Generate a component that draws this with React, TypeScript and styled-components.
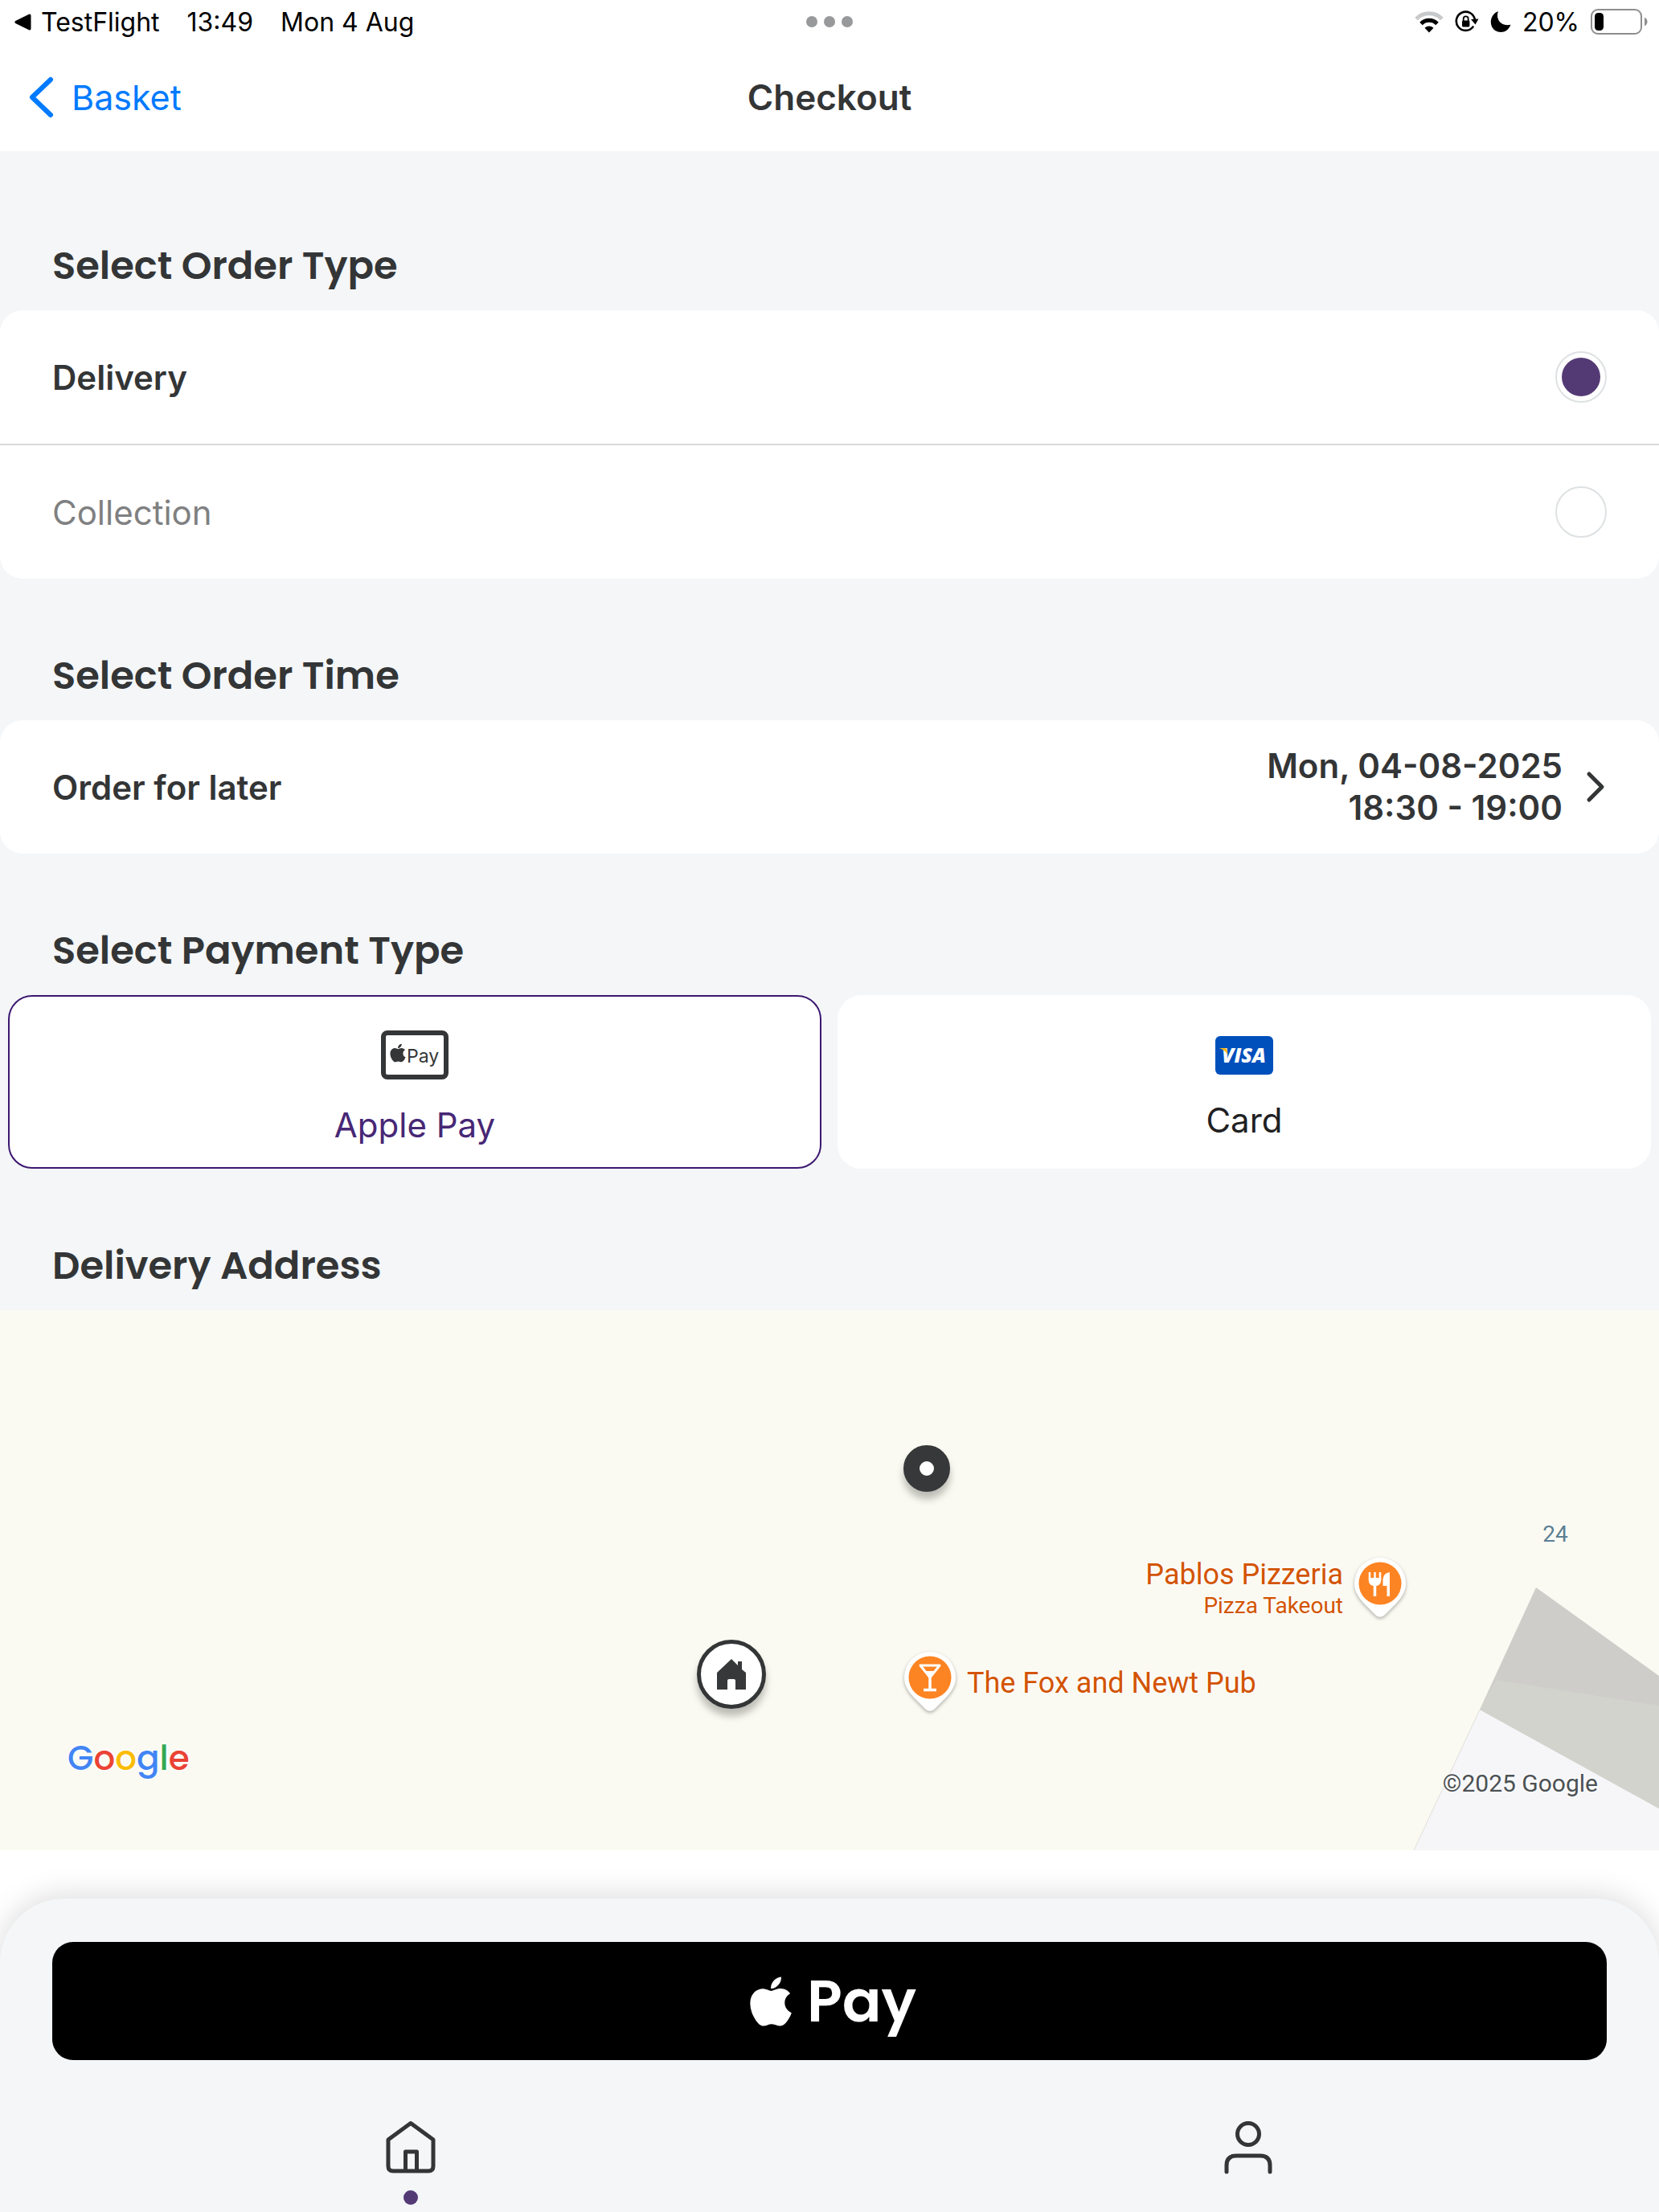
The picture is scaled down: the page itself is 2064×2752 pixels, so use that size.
import React, { useState } from 'react';
import styled, { createGlobalStyle } from 'styled-components';
import { FaApple } from 'react-icons/fa';

const GlobalStyle = createGlobalStyle`
  * {
    box-sizing: border-box;
  }

  body {
    margin: 0;
    background: #ffffff;
    color: #333536;
    font-family: Inter, "Liberation Sans", sans-serif;
  }

  button, input {
    font: inherit;
    color: inherit;
    margin: 0;
  }
`;

const Page = styled.div`
  min-height: 100vh;
  display: flex;
  flex-direction: column;
  overflow: hidden;
`;

const StatusBar = styled.div`
  display: grid;
  grid-template-columns: 1fr auto 1fr;
  align-items: center;
  height: 54px;
  padding: 0 14px;
  color: #000000;
  font-size: 32px;
`;

const StatusGroup = styled.div<{ $end?: boolean }>`
  display: flex;
  align-items: center;
  gap: ${({ $end }) => ($end ? '14px' : '34px')};
  padding-left: 4px;
  justify-content: ${({ $end }) => ($end ? 'flex-end' : 'flex-start')};
`;

const BackToApp = styled.span`
  display: flex;
  align-items: center;
  gap: 12px;
`;

const Dots = styled.div`
  display: flex;
  gap: 8px;

  i {
    width: 14px;
    height: 14px;
    border-radius: 50%;
    background: #98999b;
  }
`;

const NavBar = styled.header`
  display: grid;
  grid-template-columns: 1fr auto 1fr;
  align-items: center;
  height: 134px;
  padding: 0 34px;
`;

const BackLink = styled.a`
  display: flex;
  align-items: center;
  gap: 22px;
  color: #007aff;
  font-size: 43px;
  text-decoration: none;
`;

const Title = styled.h1`
  margin: 0;
  font-size: 44px;
  font-weight: 600;
`;

const Content = styled.main`
  padding-top: 22px;
  background: #f4f6f8;
`;

const SectionTitle = styled.h2`
  margin: 85px 65px 19px;
  font-family: Poppins, Inter, sans-serif;
  font-size: 48px;
  font-weight: 600;
  line-height: 72px;
`;

const Card = styled.div`
  background: #ffffff;
  border-radius: 28px;
  overflow: hidden;
`;

const OptionRow = styled.label<{ $active: boolean }>`
  display: flex;
  align-items: center;
  justify-content: space-between;
  height: 166px;
  padding: 0 65px;
  font-size: 42px;
  font-weight: ${({ $active }) => ($active ? 600 : 400)};
  color: ${({ $active }) => ($active ? '#333536' : '#7f8081')};

  & + & {
    height: 168px;
    border-top: 2px solid #d9dadc;
  }
`;

const Radio = styled.input`
  appearance: none;
  width: 64px;
  height: 64px;
  padding: 6px;
  border: 2px solid #dee1e3;
  border-radius: 50%;
  background: #ffffff;

  &:checked {
    background: #543a75 content-box;
  }
`;

const TimeRow = styled.button`
  display: flex;
  align-items: center;
  width: 100%;
  height: 166px;
  padding: 0 67px 0 65px;
  border: 0;
  background: #ffffff;
  font-size: 42px;
  font-weight: 600;
  text-align: left;
`;

const TimeValue = styled.span`
  margin-left: auto;
  margin-right: 29px;
  line-height: 52px;
  text-align: right;
`;

const PaymentRow = styled.div`
  display: grid;
  grid-template-columns: 1fr 1fr;
  gap: 20px;
  padding: 0 10px;
`;

const PaymentOption = styled.button<{ $active: boolean }>`
  display: flex;
  flex-direction: column;
  align-items: center;
  justify-content: center;
  gap: 31px;
  height: 216px;
  padding: 16px 0 0;
  border: 2px solid ${({ $active }) => ($active ? '#3c1870' : '#ffffff')};
  border-radius: 30px;
  background: #ffffff;
  color: ${({ $active }) => ($active ? '#472775' : '#1f2122')};
  font-size: 42px;
  line-height: 52px;

  svg {
    display: block;
  }
`;

const Map = styled.div`
  position: relative;
  height: 672px;
  overflow: hidden;
  background: #fafaf2;
  font-family: Roboto, sans-serif;
`;

const Building = styled.svg`
  position: absolute;
  right: 0;
  bottom: 0;
`;

/* pins are placed from the map centre, with their own centre as the anchor */
const Pin = styled.div<{ $x: number; $y: number }>`
  position: absolute;
  left: calc(50% + ${({ $x }) => $x}px);
  top: calc(50% + ${({ $y }) => $y}px);
  transform: translate(-50%, -50%);
  display: flex;
`;

const DriverDot = styled.span`
  width: 58px;
  height: 58px;
  border: 20px solid #363839;
  border-radius: 50%;
  background: #ffffff;
  box-shadow: 0 9px 10px rgba(0, 0, 0, 0.25);
`;

const HomeBadge = styled.span`
  display: flex;
  align-items: center;
  justify-content: center;
  width: 86px;
  height: 86px;
  border: 5px solid #333536;
  border-radius: 50%;
  background: #ffffff;
  box-shadow: 0 9px 10px rgba(0, 0, 0, 0.25);
`;

const PlaceIcon = styled.svg`
  filter: drop-shadow(0 2px 2px rgba(0, 0, 0, 0.3));
`;

const PlaceLabel = styled.span<{ $side: 'left' | 'right' }>`
  position: absolute;
  top: 50%;
  ${({ $side }) => ($side === 'left' ? 'right: 100%;' : 'left: 100%;')}
  margin: 0 8px;
  transform: translateY(-50%);
  color: #d35400;
  font-size: 36px;
  line-height: 42px;
  text-align: right;
  white-space: nowrap;
  text-shadow: 0 0 4px #ffffff, 0 0 4px #ffffff;

  small {
    display: block;
    font-size: 28px;
    line-height: 36px;
  }
`;

const HouseNumber = styled.span`
  color: #5c7f92;
  font-size: 28px;
  text-shadow: 0 0 4px #ffffff;
`;

const GoogleLogo = styled.div`
  position: absolute;
  left: 84px;
  bottom: 86px;
  font-family: "Product Sans", Poppins, sans-serif;
  font-size: 42px;
  font-weight: 500;
  line-height: 56px;
  text-shadow: 0 0 5px #ffffff, 0 0 5px #ffffff;
`;

const Letter = styled.span<{ $color: string }>`
  color: ${({ $color }) => $color};
`;

const Copyright = styled.span`
  position: absolute;
  right: 76px;
  bottom: 66px;
  color: #4c5154;
  font-size: 30px;
  line-height: 34px;
  text-shadow: 0 0 4px #ffffff, 0 0 4px #ffffff;
`;

const BottomSheet = styled.footer`
  margin-top: auto;
  padding: 54px 65px 0;
  border-radius: 80px 80px 0 0;
  background: #f4f6f8;
  box-shadow: 0 -4px 36px rgba(0, 0, 0, 0.14);
`;

const PayButton = styled.button`
  display: flex;
  align-items: center;
  justify-content: center;
  gap: 10px;
  width: 100%;
  height: 147px;
  padding: 0;
  border: 0;
  border-radius: 26px;
  background: #000000;
  color: #ffffff;
  font-family: Poppins, Inter, sans-serif;
  font-size: 72px;
  font-weight: 600;
`;

const TabBar = styled.nav`
  display: grid;
  grid-template-columns: 1fr 1fr;
  gap: 20px;
  height: 189px;
  margin: 0 -65px;
`;

const Tab = styled.a<{ $active?: boolean }>`
  display: flex;
  flex-direction: column;
  align-items: center;
  gap: 18px;
  padding-top: 72px;

  &::after {
    content: '';
    width: 18px;
    height: 18px;
    border-radius: 50%;
    background: ${({ $active }) => ($active ? '#543a75' : 'transparent')};
  }
`;

const WifiIcon = () => (
  <svg width="36" height="28" viewBox="0 0 36 28" fill="none">
    <path d="M2 10.5 A22.5 22.5 0 0 1 34 10.5" stroke="#c8c9cb" strokeWidth="5" />
    <path d="M8 16.5 A14 14 0 0 1 28 16.5" stroke="#000" strokeWidth="5" />
    <path d="M18 27.5 L12.5 21.8 A8 8 0 0 1 23.5 21.8 Z" fill="#000" />
  </svg>
);

const RotationLockIcon = () => (
  <svg width="30" height="28" viewBox="0 0 30 28" fill="none">
    <path d="M22.5 20.5 A11.6 11.6 0 1 1 24.8 11" stroke="#000" strokeWidth="2.6" strokeLinecap="round" />
    <path d="M20 11 L29.5 10.5 L25.5 17.5 Z" fill="#000" />
    <rect x="9" y="12.5" width="9.4" height="8" rx="1.4" fill="#000" />
    <path d="M10.7 13 V10.4 A3 3 0 0 1 16.7 10.4 V13" stroke="#000" strokeWidth="1.8" />
  </svg>
);

const MoonIcon = () => (
  <svg width="26" height="28" viewBox="0 0 26 28">
    <path d="M10 1 C9 3.5 8.8 6 9.2 8.5 C10.5 15.5 17 19.5 25.5 17.8 C23 24 18.5 27 13.5 27 C6 27 0.8 21.5 0.8 14.5 C0.8 8.5 4.5 3 10 1 Z" />
  </svg>
);

const BatteryIcon = () => (
  <svg width="71" height="32" viewBox="0 0 71 32" fill="none">
    <rect x="1" y="1" width="62" height="30" rx="8" stroke="#8e8e90" strokeWidth="2" />
    <path d="M67 10.5 C69.5 12 70.5 14 70.5 16 C70.5 18 69.5 20 67 21.5 Z" fill="#8e8e90" />
    <rect x="5" y="5" width="11" height="22" rx="4.5" fill="#000" />
  </svg>
);

const ApplePayIcon = () => (
  <svg width="84" height="61" viewBox="0 0 84 61">
    <rect x="3" y="3" width="78" height="55" rx="5" fill="#fff" stroke="#343637" strokeWidth="6" />
    <FaApple x="8" y="15" size={26} color="#343637" />
    <text x="32" y="40" fontFamily="Inter, sans-serif" fontSize="23" fill="#343637">Pay</text>
  </svg>
);

const VisaIcon = () => (
  <svg width="72" height="48" viewBox="0 0 72 48">
    <rect width="72" height="48" rx="6" fill="#0050bc" />
    <text x="8" y="33" fontFamily="Open Sans, sans-serif" fontSize="25" fontWeight="800" fontStyle="italic" fill="#fff">
      VISA
    </text>
    <path d="M5 15 H12 C13.5 15 14.2 16 14.5 17.5 L15.5 23 C13.5 19.5 10 17 5 15 Z" fill="#fdb913" />
  </svg>
);

const PlacePin: React.FC<{ children: React.ReactNode }> = ({ children }) => (
  <PlaceIcon width="76" height="86" viewBox="0 0 76 86" fill="none">
    <path
      d="M38 4 A32 32 0 0 1 70 36 C70 46 65 53 58 61 L44 75 C40 78.5 36 78.5 32 75 L18 61 C11 53 6 46 6 36 A32 32 0 0 1 38 4 Z"
      fill="#fff"
    />
    <circle cx="38" cy="36" r="26.5" fill="#fd8423" />
    {children}
  </PlaceIcon>
);

const App: React.FC = () => {
  const [orderType, setOrderType] = useState('Delivery');
  const [payment, setPayment] = useState('apple');

  return (
    <>
      <GlobalStyle />
      <Page>
        <StatusBar>
          <StatusGroup>
            <BackToApp>
              <svg width="21" height="21" viewBox="0 0 21 21">
                <path d="M1.2 9 L18 0.8 Q20.5 0 20.5 2.5 V18.5 Q20.5 21 18 20.2 L1.2 12 Q-0.5 10.5 1.2 9 Z" />
              </svg>
              TestFlight
            </BackToApp>
            <span>13:49</span>
            <span>Mon 4 Aug</span>
          </StatusGroup>
          <Dots>
            <i />
            <i />
            <i />
          </Dots>
          <StatusGroup $end>
            <WifiIcon />
            <RotationLockIcon />
            <MoonIcon />
            <span>20%</span>
            <BatteryIcon />
          </StatusGroup>
        </StatusBar>

        <NavBar>
          <BackLink href="#basket">
            <svg width="33" height="52" viewBox="0 0 33 52" fill="none">
              <path d="M29 4 L6 26 L29 48" stroke="#007aff" strokeWidth="6" strokeLinecap="round" strokeLinejoin="round" />
            </svg>
            Basket
          </BackLink>
          <Title>Checkout</Title>
        </NavBar>

        <Content>
          <SectionTitle>Select Order Type</SectionTitle>
          <Card>
            {['Delivery', 'Collection'].map((type) => (
              <OptionRow key={type} $active={orderType === type}>
                {type}
                <Radio
                  type="radio"
                  name="orderType"
                  checked={orderType === type}
                  onChange={() => setOrderType(type)}
                />
              </OptionRow>
            ))}
          </Card>

          <SectionTitle>Select Order Time</SectionTitle>
          <Card>
            <TimeRow type="button">
              Order for later
              <TimeValue>
                Mon, 04-08-2025
                <br />
                18:30 - 19:00
              </TimeValue>
              <svg width="24" height="40" viewBox="0 0 24 40" fill="none">
                <path d="M4 4 L20 20 L4 36" stroke="#333536" strokeWidth="5" strokeLinecap="round" strokeLinejoin="round" />
              </svg>
            </TimeRow>
          </Card>

          <SectionTitle>Select Payment Type</SectionTitle>
          <PaymentRow>
            <PaymentOption
              type="button"
              $active={payment === 'apple'}
              aria-pressed={payment === 'apple'}
              onClick={() => setPayment('apple')}
            >
              <ApplePayIcon />
              Apple Pay
            </PaymentOption>
            <PaymentOption
              type="button"
              $active={payment === 'card'}
              aria-pressed={payment === 'card'}
              onClick={() => setPayment('card')}
            >
              <VisaIcon />
              Card
            </PaymentOption>
          </PaymentRow>

          <SectionTitle>Delivery Address</SectionTitle>
          <Map>
            <Building width="305" height="327" viewBox="0 0 305 327">
              <path d="M82 152 L305 275 V327 H0 Z" fill="#f6f6f9" />
              <path d="M82 152 L0 327" stroke="#dfdfda" strokeWidth="1" />
              <path d="M152 0 L305 110 V275 L82 152 Z" fill="#cecdc9" />
              <path d="M102 115 L305 147 V275 L82 152 Z" fill="#d3d3ce" />
            </Building>
            <Pin $x={121} $y={-139}>
              <DriverDot />
            </Pin>
            <Pin $x={-122} $y={117}>
              <HomeBadge>
                <svg width="36" height="38" viewBox="0 0 36 38">
                  <path d="M18 0 L26 8 V3 H31 V13 L36 17 V38 H23 V27 Q23 25 21 25 H15 Q13 25 13 27 V38 H0 V17 Z" fill="#363839" />
                </svg>
              </HomeBadge>
            </Pin>
            <Pin $x={903} $y={-58}>
              <HouseNumber>24</HouseNumber>
            </Pin>
            <Pin $x={685} $y={11}>
              <PlacePin>
                <path d="M25 22 V32 M31.5 22 V32 M38 22 V32" stroke="#fff" strokeWidth="2.5" />
                <path d="M23.8 29 H39.2 V32 Q39 38 33.5 39 H29.5 Q24 38 23.8 32 Z" fill="#fff" />
                <path d="M31.5 34 V52" stroke="#fff" strokeWidth="3.5" />
                <path d="M50 22 V52 H46.5 V39 H41.5 V31 Q42 23 50 22 Z" fill="#fff" />
              </PlacePin>
              <PlaceLabel $side="left">
                Pablos Pizzeria
                <small>Pizza Takeout</small>
              </PlaceLabel>
            </Pin>
            <Pin $x={125} $y={128}>
              <PlacePin>
                <path d="M26 21 H50 L38 36 Z" stroke="#fff" strokeWidth="3" strokeLinejoin="round" />
                <path d="M31 28 H45 L38 36 Z" fill="#fff" />
                <path d="M38 35 V51 M30 51.5 H46" stroke="#fff" strokeWidth="3.5" />
              </PlacePin>
              <PlaceLabel $side="right">The Fox and Newt Pub</PlaceLabel>
            </Pin>
            <GoogleLogo>
              <Letter $color="#4285f4">G</Letter>
              <Letter $color="#ea4335">o</Letter>
              <Letter $color="#fbbc05">o</Letter>
              <Letter $color="#4285f4">g</Letter>
              <Letter $color="#34a853">l</Letter>
              <Letter $color="#ea4335">e</Letter>
            </GoogleLogo>
            <Copyright>©2025 Google</Copyright>
          </Map>
        </Content>

        <BottomSheet>
          <PayButton type="button">
            <FaApple size={70} />
            Pay
          </PayButton>
          <TabBar>
            <Tab href="#home" $active aria-label="Home">
              <svg width="62" height="72" viewBox="0 0 62 72" fill="none" stroke="#333536" strokeWidth="5" strokeLinejoin="round">
                <path d="M3 27 L31 6.5 L59 27 V60 Q59 66 53 66 H9 Q3 66 3 60 Z" />
                <path d="M24.5 66 V42 H38.5 V66" />
              </svg>
            </Tab>
            <Tab href="#account" aria-label="Account">
              <svg width="62" height="72" viewBox="0 0 62 72" fill="none" stroke="#333536" strokeWidth="5" strokeLinecap="round">
                <circle cx="31" cy="20" r="13.5" />
                <path d="M4 67 V59 Q4 47 16 47 H46 Q58 47 58 59 V67" />
              </svg>
            </Tab>
          </TabBar>
        </BottomSheet>
      </Page>
    </>
  );
};

export default App;
